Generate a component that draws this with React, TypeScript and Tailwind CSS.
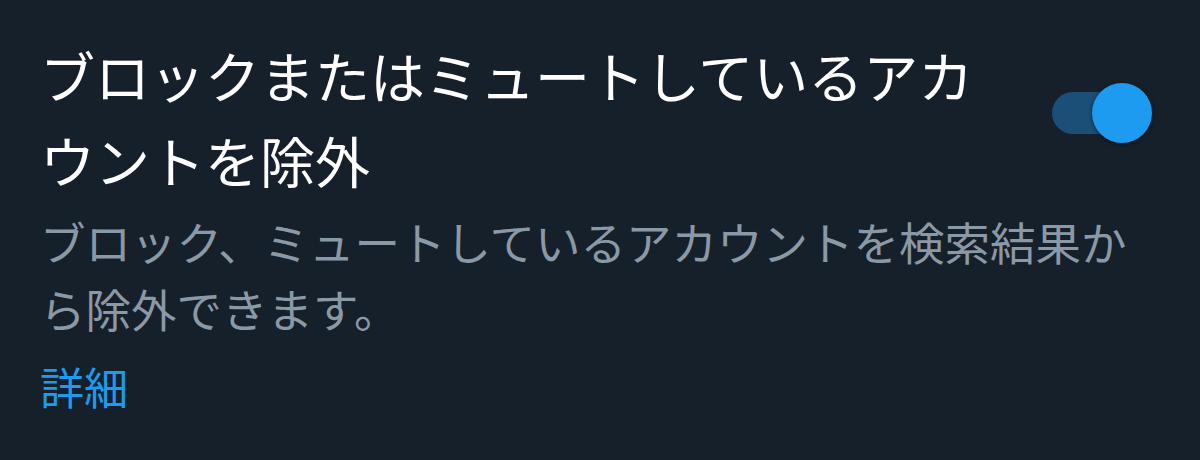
import React from "react";

export default function App() {
  return (
    <div
      className="w-[1200px] h-[460px] bg-[#16202b] overflow-hidden"
      style={{ fontFamily: '"Noto Sans CJK JP", "Noto Sans", sans-serif' }}
    >
      <div className="flex items-start pl-[40px] pr-[48px] pt-[32px]">
        <div className="flex-1 min-w-0">
          <div className="w-[960px] text-[55px] leading-[85px] text-white">
            ブロックまたはミュートしているアカウントを除外
          </div>
          <div className="mt-[6px] w-[1110px] text-[45.5px] leading-[67px] text-[#8b98a5]">
            ブロック、ミュートしているアカウントを検索結果から除外できます。
          </div>
          <div className="mt-[14px] text-[44px] leading-[60px] text-[#1d9bf0]">詳細</div>
        </div>
        <div className="relative mt-[51px] w-[100px] h-[60px] shrink-0 -ml-[100px]">
          <div className="absolute left-0 top-[9px] w-[80px] h-[42px] rounded-full bg-[#1b4f78]" />
          <div className="absolute right-0 top-0 w-[60px] h-[60px] rounded-full bg-[#1d9bf0] shadow-[0_1px_4px_rgba(0,0,0,0.5)]" />
        </div>
      </div>
    </div>
  );
}
